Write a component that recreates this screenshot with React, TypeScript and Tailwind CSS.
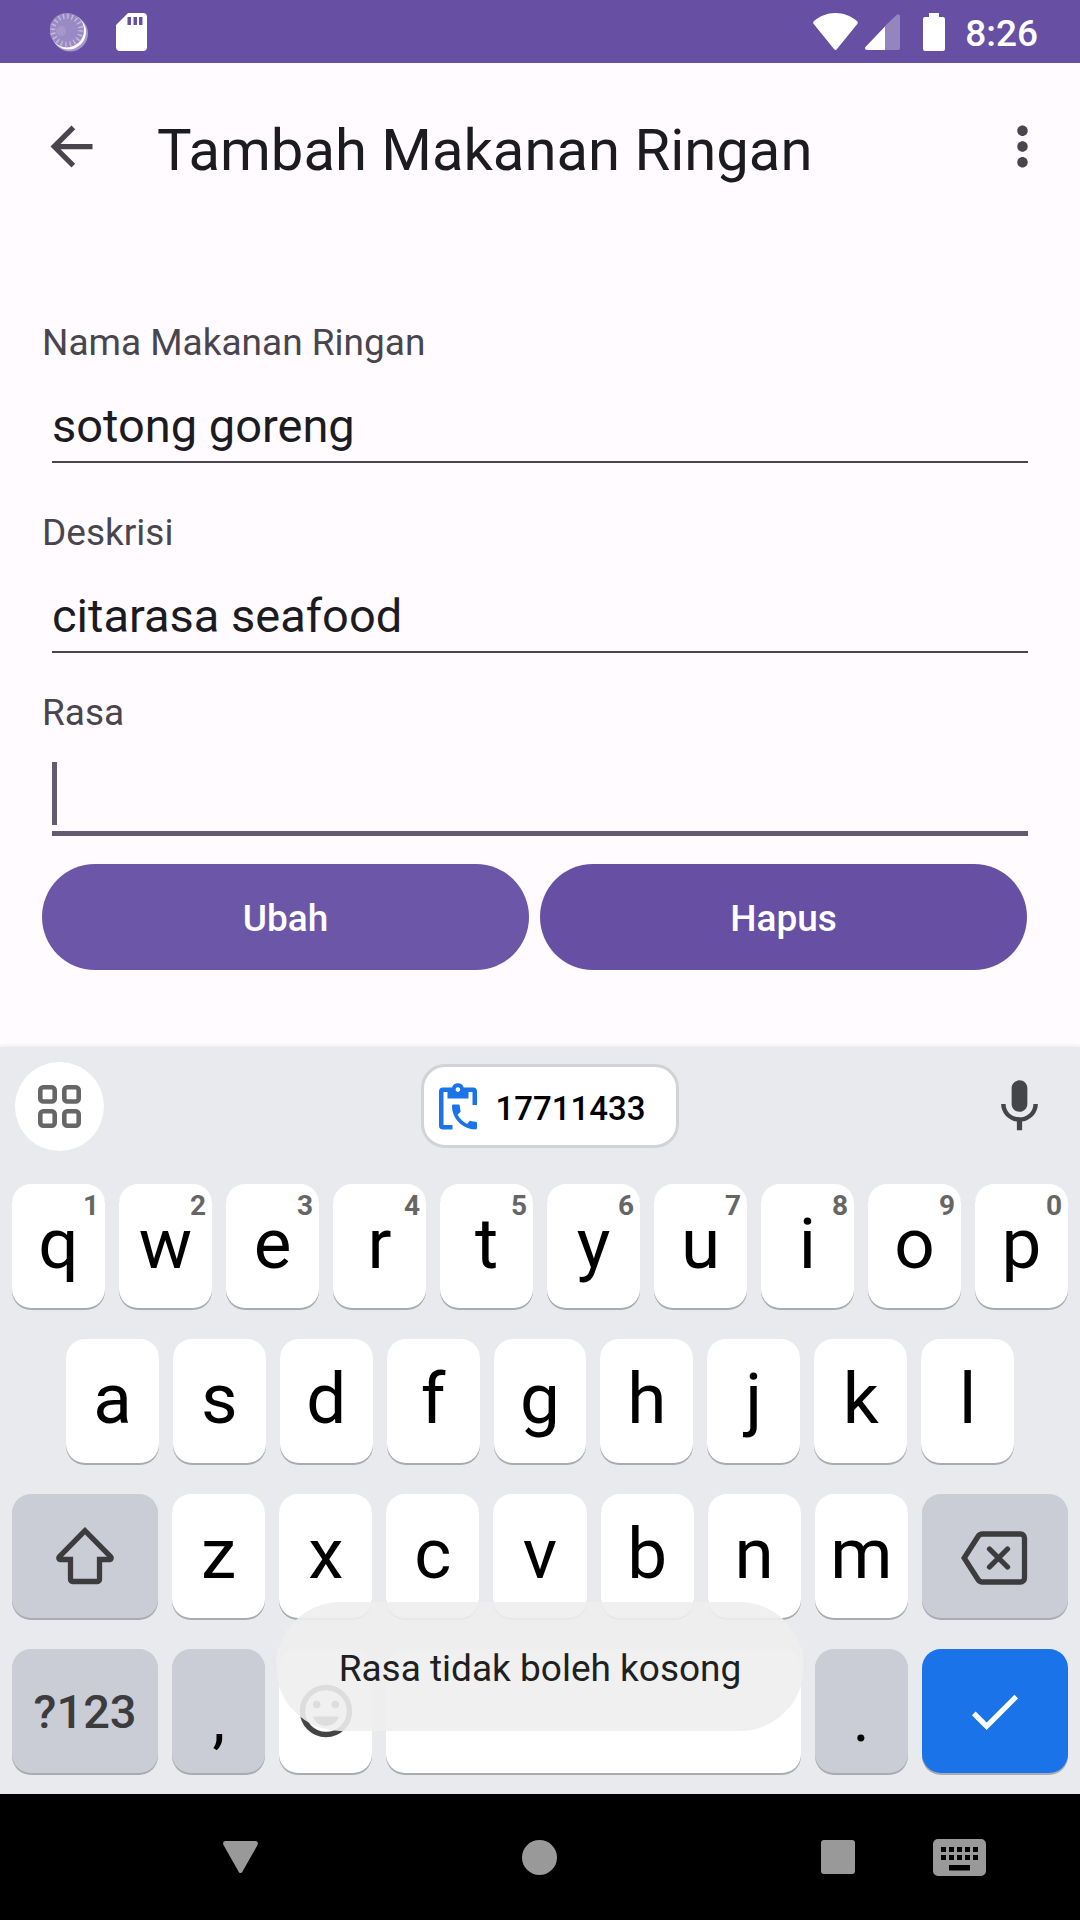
import { useState } from "react";
import type { ReactNode } from "react";
import { MdArrowBack, MdCheck, MdMic, MdMoreVert } from "react-icons/md";

function LoadingDot() {
  return (
    <svg className="h-[40px] w-[38px]" viewBox="0 0 38 40" aria-hidden="true">
      <circle cx="20" cy="21.5" r="18" fill="#a897cf" />
      <circle cx="18.5" cy="20" r="17.5" fill="#ffffff" />
      <circle cx="16.8" cy="18.2" r="17.2" fill="#9a8ac3" />
      <circle cx="16.8" cy="18.2" r="14" fill="none" stroke="#c5bade" strokeWidth="5" strokeDasharray="1.4 3" />
      <circle cx="11" cy="19" r="5" fill="#a697ca" />
    </svg>
  );
}

function SdCard() {
  return (
    <svg className="h-[38px] w-[31px]" viewBox="0 0 31 38" aria-hidden="true">
      <path
        fillRule="evenodd"
        fill="#ffffff"
        d="M12 0H27a4 4 0 0 1 4 4V34a4 4 0 0 1-4 4H4a4 4 0 0 1-4-4V12ZM11.500 4V12H15V4ZM17.500 4V12H21V4ZM23 4V12H26.500V4Z"
      />
    </svg>
  );
}

function Wifi() {
  return (
    <svg className="h-[37px] w-[45px]" viewBox="0 0 45 37" aria-hidden="true">
      <path fill="#ffffff" d="M1 8C7 3 14 0 22.500 0S38 3 44 8c1 1 1 2 .3 3L24 36c-1 1.300-2 1.300-3 0L.7 11C0 10 0 9 1 8Z" />
    </svg>
  );
}

function Signal() {
  return (
    <svg className="h-[36px] w-[35px]" viewBox="0 0 35 36" aria-hidden="true">
      <path fill="#9585bf" d="M20 12 31.500 1C33-.4 35 .4 35 2.500V34a2 2 0 0 1-2 2H20Z" />
      <path fill="#ffffff" d="M20 12.500V36H2c-2 0-2.600-1.800-1.300-3.200Z" />
    </svg>
  );
}

function Battery() {
  return (
    <svg className="h-[38px] w-[22px]" viewBox="0 0 22 38" aria-hidden="true">
      <path fill="#ffffff" d="M6 0H16V4H20a2 2 0 0 1 2 2V36a2 2 0 0 1-2 2H2a2 2 0 0 1-2-2V6a2 2 0 0 1 2-2H6Z" />
    </svg>
  );
}

function GridIcon() {
  return (
    <svg className="size-[43px]" viewBox="0 0 43 43" fill="none" stroke="#666666" strokeWidth="4.600" aria-hidden="true">
      <rect x="2.300" y="2.300" width="14.400" height="14.200" rx="3" />
      <rect x="26.300" y="2.300" width="14.400" height="14.200" rx="3" />
      <rect x="2.300" y="26.300" width="14.400" height="14.400" rx="3" />
      <rect x="26.300" y="26.300" width="14.400" height="14.400" rx="3" />
    </svg>
  );
}

function ClipboardPhone() {
  return (
    <svg className="h-[47px] w-[38px]" viewBox="0 0 38 47" fill="#1a73e8" aria-hidden="true">
      <path
        fillRule="evenodd"
        d="M4 4.500H13A6.200 6.200 0 0 1 24.700 4.500H34a4 4 0 0 1 4 4V22H33.500V9H29.500V15.500H8.500V9H4.500V42H13.500V46.500H4a4 4 0 0 1-4-4V8.500a4 4 0 0 1 4-4ZM18.900 4.300a2.300 2.300 0 1 0 .01 0Z"
      />
      <path
        transform="translate(8.800 17.300) scale(1.390)"
        d="M20.010 15.380c-1.230 0-2.420-.2-3.530-.56-.35-.12-.74-.03-1.010.24l-1.570 1.970c-2.830-1.350-5.480-3.900-6.890-6.830l1.950-1.660c.27-.28.35-.67.24-1.020-.37-1.110-.56-2.300-.56-3.530 0-.54-.45-.99-.99-.99H4.190C3.650 3 3 3.240 3 3.990 3 13.280 10.730 21 20.010 21c.71 0 .99-.63.99-1.180v-3.450c0-.54-.45-.99-.99-.99z"
      />
    </svg>
  );
}

function ShiftIcon() {
  return (
    <svg className="size-[60px]" viewBox="0 0 60 60" fill="none" stroke="#3c3c3e" strokeWidth="5.300" aria-hidden="true">
      <path d="M30 4.700 4.200 30.800a1.600 1.600 0 0 0 1 2.700H15.500V53.500a2 2 0 0 0 2 2H42.500a2 2 0 0 0 2-2V33.500H54.800a1.600 1.600 0 0 0 1-2.700Z" />
    </svg>
  );
}

function BackspaceIcon() {
  return (
    <svg className="h-[54px] w-[67px]" viewBox="0 0 67 54" fill="none" stroke="#3c3c3e" strokeWidth="5.300" aria-hidden="true">
      <path d="M3.200 27 17 5.500Q18.600 3 21.500 3H59.500a4 4 0 0 1 4 4V47a4 4 0 0 1-4 4H21.500Q18.600 51 17 48.500Z" />
      <path strokeLinecap="round" d="M28.500 18 46.500 36M46.500 18 28.500 36" />
    </svg>
  );
}

function SmileIcon() {
  return (
    <svg className="size-[54px]" viewBox="0 0 54 54" fill="#444444" aria-hidden="true">
      <circle cx="27" cy="27" r="23.500" fill="none" stroke="#444444" strokeWidth="5.500" />
      <circle cx="17.700" cy="20.500" r="3.800" />
      <circle cx="36.300" cy="20.500" r="3.800" />
      <path d="M14 32.500H40C38 38.500 33 42 27 42S16 38.500 14 32.500Z" />
    </svg>
  );
}

function KeyboardIcon() {
  return (
    <svg className="h-[37px] w-[53px]" viewBox="0 0 53 37" aria-hidden="true">
      <path
        fillRule="evenodd"
        fill="#999999"
        d="M5 0H48a5 5 0 0 1 5 5V32a5 5 0 0 1-5 5H5a5 5 0 0 1-5-5V5a5 5 0 0 1 5-5ZM8 8V13H13V8ZM16 8V13H21V8ZM24 8V13H29V8ZM32 8V13H37V8ZM40 8V13H45V8ZM8 16V21H13V16ZM16 16V21H21V16ZM24 16V21H29V16ZM32 16V21H37V16ZM40 16V21H45V16ZM16 26V31.500H37V26Z"
      />
    </svg>
  );
}

const keyBase =
  "relative flex h-[124px] min-w-0 basis-0 items-center justify-center rounded-[19px] shadow-[0_2px_0_#a9abae]";

function LetterKey({ letter, hint }: { letter: string; hint?: string }) {
  return (
    <button type="button" className={`${keyBase} grow-[93] bg-white pb-[4px] text-[71px] leading-[84px] text-black`}>
      {letter}
      {hint && (
        <span className="absolute top-[6px] right-[6px] text-[28px] leading-[32px] font-bold text-[#666666]">{hint}</span>
      )}
    </button>
  );
}

function Key({ label, className, children }: { label: string; className: string; children?: ReactNode }) {
  return (
    <button type="button" aria-label={label} className={`${keyBase} ${className}`}>
      {children}
    </button>
  );
}

function Field({ id, label, initial, focused = false }: { id: string; label: string; initial: string; focused?: boolean }) {
  const [value, setValue] = useState(initial);
  return (
    <div>
      <label htmlFor={id} className="block text-[37px] leading-[44px] text-[#49454f]">
        {label}
      </label>
      <div className="relative mx-[10px]">
        <input
          id={id}
          type="text"
          value={value}
          onChange={(event) => setValue(event.target.value)}
          className={
            focused
              ? "block w-full border-b-[5px] border-[#635b70] bg-transparent pt-[33px] pb-[7px] text-[47px] leading-[56px] text-[#1c1b1f] outline-none"
              : "block w-full border-b-2 border-[#49454f] bg-transparent pt-[33px] pb-[7px] text-[47px] leading-[56px] text-[#1c1b1f] outline-none"
          }
        />
        {focused && <span className="absolute top-[27px] left-0 h-[63px] w-[5px] bg-[#635b70]" />}
      </div>
    </div>
  );
}

const topRow = ["q", "w", "e", "r", "t", "y", "u", "i", "o", "p"];
const homeRow = ["a", "s", "d", "f", "g", "h", "j", "k", "l"];
const bottomRow = ["z", "x", "c", "v", "b", "n", "m"];

export default function App() {
  return (
    <div className="flex min-h-screen flex-col bg-[#fffbff] font-['Roboto',sans-serif]">
      <div className="flex h-[63px] items-center bg-[#6750a3] pr-[42px] pl-[50px] text-white">
        <LoadingDot />
        <span className="ml-[28px] flex">
          <SdCard />
        </span>
        <div className="ml-auto flex items-center">
          <Wifi />
          <span className="ml-[7px] flex">
            <Signal />
          </span>
          <span className="ml-[23px] flex">
            <Battery />
          </span>
          <span className="ml-[20px] pt-[4px] text-[37px] leading-[44px] font-medium">8:26</span>
        </div>
      </div>

      <header className="flex h-[166px] items-center pr-[26px] pl-[40px]">
        <button type="button" aria-label="Kembali" className="text-[#49454f]">
          <MdArrowBack className="size-[63px]" />
        </button>
        <h1 className="ml-[54px] flex-1 pt-[8px] text-[58px] leading-[68px] text-[#1c1b1f]">Tambah Makanan Ringan</h1>
        <button type="button" aria-label="Opsi lainnya" className="text-[#49454f]">
          <MdMoreVert className="size-[63px]" />
        </button>
      </header>

      <main className="flex-1 px-[42px] pt-[92px] pb-[77px]">
        <form onSubmit={(event) => event.preventDefault()}>
          <Field id="nama" label="Nama Makanan Ringan" initial="sotong goreng" />
          <div className="mt-[48px]">
            <Field id="deskripsi" label="Deskrisi" initial="citarasa seafood" />
          </div>
          <div className="mt-[38px]">
            <Field id="rasa" label="Rasa" initial="" focused />
          </div>
          <div className="mt-[28px] mr-[11px] flex gap-[11px] text-[37px] leading-[44px] font-medium text-white">
            <button type="submit" className="h-[106px] flex-1 rounded-full bg-[#6b56a7] pt-[4px]">
              Ubah
            </button>
            <button type="button" className="h-[106px] flex-1 rounded-full bg-[#6750a3] pt-[4px]">
              Hapus
            </button>
          </div>
        </form>
      </main>

      <section aria-label="Keyboard" className="relative bg-[#e8eaed] pb-[21px] shadow-[0_-1px_4px_rgba(0,0,0,0.08)]">
        <div className="flex h-[118px] items-center justify-between pr-[29px] pl-[15px]">
          <button type="button" aria-label="Menu" className="flex size-[89px] items-center justify-center rounded-full bg-white">
            <GridIcon />
          </button>
          <button
            type="button"
            className="ml-[8px] flex h-[84px] items-center rounded-[24px] border-[3px] border-[#d2d3d6] bg-white pr-[30px] pl-[15px] text-[33px] leading-[44px] font-medium text-black"
          >
            <ClipboardPhone />
            <span className="ml-[18px] pt-[6px]">17711433</span>
          </button>
          <button type="button" aria-label="Input suara" className="text-[#444548]">
            <MdMic className="size-[63px]" />
          </button>
        </div>

        <div className="mt-[19px] flex flex-col gap-[31px] px-[12px]">
          <div className="flex gap-[14px]">
            {topRow.map((letter, index) => (
              <LetterKey key={letter} letter={letter} hint={String((index + 1) % 10)} />
            ))}
          </div>
          <div className="flex gap-[14px] px-[54px]">
            {homeRow.map((letter) => (
              <LetterKey key={letter} letter={letter} />
            ))}
          </div>
          <div className="flex gap-[14px]">
            <Key label="Shift" className="grow-[146] bg-[#cbcdd6]">
              <ShiftIcon />
            </Key>
            {bottomRow.map((letter) => (
              <LetterKey key={letter} letter={letter} />
            ))}
            <Key label="Hapus karakter" className="grow-[146] bg-[#cbcdd6] pt-[4px]">
              <BackspaceIcon />
            </Key>
          </div>
          <div className="flex gap-[14px]">
            <Key label="Simbol" className="grow-[146] bg-[#cbcdd6] pt-[2px] text-[47px] leading-[56px] font-medium text-[#3c3c3e]">
              ?123
            </Key>
            <Key label="Koma" className="grow-[93] bg-[#cbcdd6] pt-[18px] text-[64px] leading-[76px] text-black">
              ,
            </Key>
            <Key label="Emoji" className="grow-[93] bg-white">
              <SmileIcon />
            </Key>
            <Key label="Spasi" className="grow-[414] bg-white" />
            <Key label="Titik" className="grow-[93] bg-[#cbcdd6] pt-[18px] text-[64px] leading-[76px] text-black">
              .
            </Key>
            <Key label="Selesai" className="grow-[146] bg-[#1a73e8] text-white">
              <MdCheck className="size-[63px]" />
            </Key>
          </div>
        </div>

        <div className="pointer-events-none absolute inset-x-0 bottom-[63px] flex justify-center">
          <div
            role="status"
            className="flex h-[129px] items-center rounded-full bg-[#eeeeee]/90 px-[63px] pt-[4px] text-[37px] leading-[44px] text-[#202020]"
          >
            Rasa tidak boleh kosong
          </div>
        </div>
      </section>

      <nav aria-label="Navigasi sistem" className="flex h-[126px] items-center bg-black pr-[94px] pl-[223px]">
        <div className="flex flex-1 items-center justify-between">
          <button type="button" aria-label="Kembali">
            <svg className="h-[32px] w-[35px]" viewBox="0 0 35 32" fill="#999999" aria-hidden="true">
              <path d="M2.500 0H32.500C34.700 0 35.500 2 34.500 4L19.500 30.500C18.500 32.500 16.500 32.500 15.500 30.500L.5 4C-.5 2 .3 0 2.500 0Z" />
            </svg>
          </button>
          <button type="button" aria-label="Beranda">
            <span className="block size-[35px] rounded-full bg-[#999999]" />
          </button>
          <button type="button" aria-label="Aplikasi terbaru">
            <span className="block size-[34px] rounded-[3px] bg-[#999999]" />
          </button>
        </div>
        <button type="button" aria-label="Ganti keyboard" className="ml-[78px]">
          <KeyboardIcon />
        </button>
      </nav>
    </div>
  );
}
